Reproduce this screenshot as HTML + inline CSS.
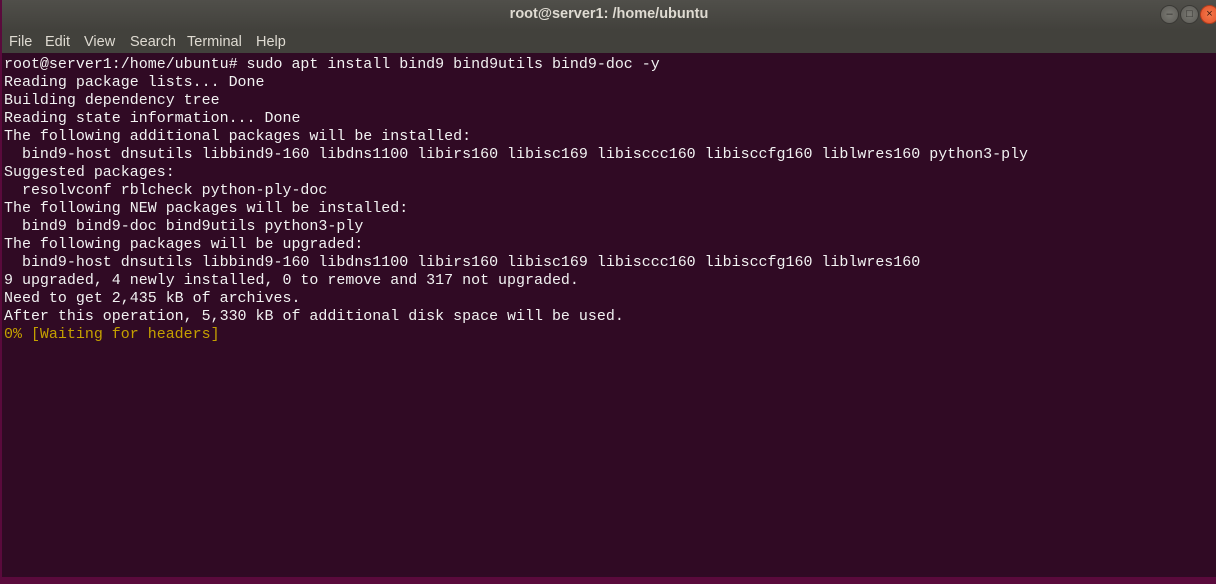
<!DOCTYPE html>
<html><head><style>
body{margin:0;width:1216px;height:584px;overflow:hidden;background:#5a0a3c;font-family:"Liberation Sans",sans-serif;position:relative}
.win{position:absolute;left:2px;top:0;width:1214px;height:577px;background:#300a24}
.title{position:absolute;left:0;top:0;width:1214px;height:30px;background:linear-gradient(#504f4a,#42413c);color:#dfdbd2;font-weight:bold;font-size:14.5px;text-align:center;line-height:28px}
.menu{position:absolute;left:0;top:30px;width:1214px;height:23px;background:#42413c;color:#dfdbd2;font-size:14.5px;line-height:24px}
.menu span{position:absolute;top:0}
.btn{position:absolute;top:5px;width:17px;height:17px;border-radius:50%;background:radial-gradient(#7a7973,#5b5a55);border:1px solid #3a3935;color:#2e2d2a;font-size:11px;text-align:center;line-height:17px}
pre{position:absolute;left:2px;top:56px;margin:0;font-family:"Liberation Mono",monospace;font-size:14.98px;line-height:18px;color:#f2f2f2}
.y{color:#c4a000}
</style></head><body>
<div class="win">
<div class="title">root@server1: /home/ubuntu</div>
<div class="btn" style="left:1158px">–</div>
<div class="btn" style="left:1178px">□</div>
<div class="btn" style="left:1198px;background:radial-gradient(#f47a4b,#e1502a);border-color:#b23d1c;color:#3a1a10">×</div>
<div class="menu"><span style="left:7px">File</span><span style="left:43px">Edit</span><span style="left:82px">View</span><span style="left:128px">Search</span><span style="left:185px">Terminal</span><span style="left:254px">Help</span></div>
<pre>root@server1:/home/ubuntu# sudo apt install bind9 bind9utils bind9-doc -y
Reading package lists... Done
Building dependency tree
Reading state information... Done
The following additional packages will be installed:
  bind9-host dnsutils libbind9-160 libdns1100 libirs160 libisc169 libisccc160 libisccfg160 liblwres160 python3-ply
Suggested packages:
  resolvconf rblcheck python-ply-doc
The following NEW packages will be installed:
  bind9 bind9-doc bind9utils python3-ply
The following packages will be upgraded:
  bind9-host dnsutils libbind9-160 libdns1100 libirs160 libisc169 libisccc160 libisccfg160 liblwres160
9 upgraded, 4 newly installed, 0 to remove and 317 not upgraded.
Need to get 2,435 kB of archives.
After this operation, 5,330 kB of additional disk space will be used.
<span class="y">0% [Waiting for headers]</span></pre>
</div>
</body></html>
